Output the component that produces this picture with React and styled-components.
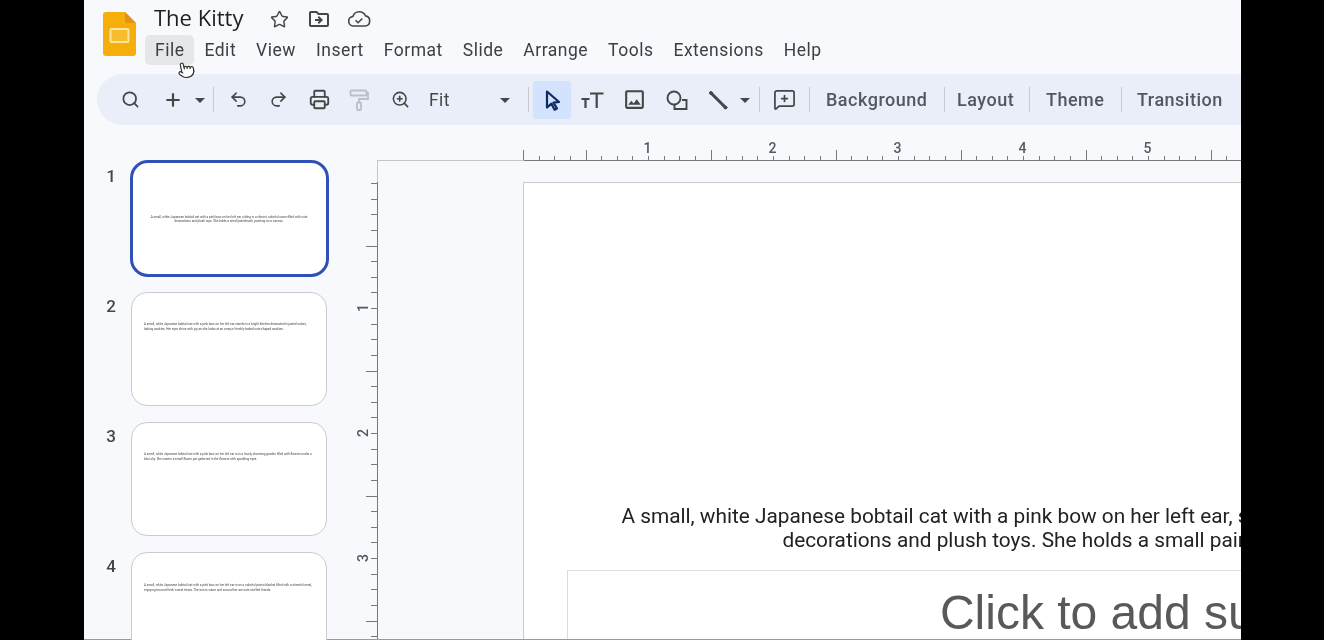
import styled, { createGlobalStyle } from 'styled-components';
import { Search, Plus, Undo2, Redo2, Printer, ZoomIn, MessageSquarePlus, Star, Pointer } from 'lucide-react';
import { MdArrowDropDown, MdOutlineDriveFileMove, MdOutlineImage } from 'react-icons/md';

const MENUS = ['Edit', 'View', 'Insert', 'Format', 'Slide', 'Arrange', 'Tools', 'Extensions', 'Help'];
const INCH = 125;

const THUMBS = [
  {
    id: 1,
    top: 52,
    center: true,
    lines: [
      'A small, white Japanese bobtail cat with a pink bow on her left ear, sitting in a vibrant, colorful room filled with cute',
      'decorations and plush toys. She holds a small paintbrush, painting on a canvas.',
    ],
  },
  {
    id: 2,
    top: 29,
    lines: [
      'A small, white Japanese bobtail cat with a pink bow on her left ear stands in a bright kitchen decorated in pastel colors,',
      'baking cookies. Her eyes shine with joy as she looks at an array of freshly baked cute shaped cookies.',
    ],
  },
  {
    id: 3,
    top: 29,
    lines: [
      'A small, white Japanese bobtail cat with a pink bow on her left ear is in a lovely charming garden filled with flowers under a',
      'blue sky. She waters a small flower pot gathered in the flowers with sparkling eyes.',
    ],
  },
  {
    id: 4,
    top: 30,
    lines: [
      'A small, white Japanese bobtail cat with a pink bow on her left ear is on a colorful picnic blanket filled with a cheerful meal,',
      'enjoying tea and fresh sweet treats. The sun is warm and around her are cute stuffed friends.',
    ],
  },
];

function range(n) {
  return Array.from({ length: n }, (_, i) => i);
}

function TopRuler() {
  const x0 = 145.5;
  return (
    <svg width="864" height="42" style={{ display: 'block' }}>
      <path d="M0 20.5H146" stroke="#c4c6ca" fill="none" />
      <path d="M146 20.5H864" stroke="#77797d" fill="none" />
      {range(56).map((i) => {
        const x = Math.floor(x0 + (i * INCH) / 8) + 0.5;
        const tall = i % 8 === 4 || i === 0;
        return <path key={i} d={`M${x} 20V${tall ? 10 : 16}`} stroke="#77797d" fill="none" />;
      })}
      {range(5).map((i) => (
        <RulerNumber key={i} x={x0 + (i + 1) * INCH - 1} y="13" textAnchor="middle">
          {i + 1}
        </RulerNumber>
      ))}
    </svg>
  );
}

function SideRuler() {
  return (
    <svg width="24" height="458" style={{ display: 'block' }}>
      <path d="M23.5 0V458" stroke="#77797d" fill="none" />
      {range(30).map((i) => {
        const y = Math.round((i * INCH) / 8) + 1.5;
        const half = i % 8 === 4;
        return <path key={i} d={`M23 ${y}H${half ? 12 : 17}`} stroke="#77797d" fill="none" />;
      })}
      {range(3).map((i) => {
        const y = (i + 1) * INCH + 1;
        return (
          <RulerNumber key={i} x="10" y={y} textAnchor="middle" dominantBaseline="middle" transform={`rotate(-90 10 ${y})`}>
            {i + 1}
          </RulerNumber>
        );
      })}
    </svg>
  );
}

function SlidesLogo() {
  return (
    <svg width="33" height="44" viewBox="0 0 33 44" style={{ display: 'block' }}>
      <path d="M3 0H22L33 11V41a3 3 0 0 1-3 3H3a3 3 0 0 1-3-3V3a3 3 0 0 1 3-3z" fill="#f6ae0a" />
      <path d="M22 0L33 11H24a2 2 0 0 1-2-2z" fill="#ea8f12" />
      <rect x="7.5" y="17" width="18" height="13" rx="1" fill="#f8bd2c" stroke="#fbe3a4" strokeWidth="2" />
    </svg>
  );
}

function CloudDone() {
  return (
    <svg width="26" height="26" viewBox="0 0 24 24" fill="none" stroke="#444746" strokeWidth="1.500" strokeLinejoin="round">
      <path d="M7 18.500a4.500 4.500 0 0 1-.6-8.960A6.200 6.200 0 0 1 18 9.100a4.750 4.750 0 0 1-.5 9.400z" />
      <path d="m8.800 13.200 2.300 2.300 4-4" />
    </svg>
  );
}

function RollerIcon() {
  return (
    <svg width="24" height="24" viewBox="0 0 24 24" fill="none" stroke="#bcbfc3" strokeWidth="1.800">
      <rect x="3.500" y="2.500" width="16" height="5" rx="1" />
      <path d="M19.500 5h1.500v6h-9v3.500" />
      <rect x="10" y="14.500" width="4" height="7.500" rx="1" />
    </svg>
  );
}

function SelectIcon() {
  return (
    <svg width="24" height="24" viewBox="0 0 24 24" fill="none" stroke="#0b2a66" strokeWidth="2.200" strokeLinejoin="round">
      <path d="M7 3.500 19 14l-5.500.6L17 20.500l-2.400 1.200-3.200-6L7 19.500z" />
    </svg>
  );
}

function TextSizeIcon() {
  return (
    <svg width="24" height="24" viewBox="0 0 24 24" fill="none" stroke="#444746" strokeWidth="2.200">
      <path d="M10 5.500h13.500M16.700 5.500V20" />
      <path d="M1.500 11h8M5.500 11v9" />
    </svg>
  );
}

function ShapesIcon() {
  return (
    <svg width="24" height="24" viewBox="0 0 24 24" fill="none" stroke="#444746" strokeWidth="1.900">
      <circle cx="9" cy="10" r="6.500" />
      <path d="M17 12h4.500v9H9.500v-4.500" />
    </svg>
  );
}

function LineIcon() {
  return (
    <svg width="24" height="24" viewBox="0 0 24 24" fill="none" stroke="#444746" strokeLinecap="round">
      <path d="M5.500 5.500 19 19" strokeWidth="3" />
      <circle cx="5" cy="5" r="1.500" fill="#444746" />
      <circle cx="19.500" cy="19.500" r="1.500" fill="#444746" />
    </svg>
  );
}

function App() {
  return (
    <Frame>
      <GlobalStyle />
      <Window>
        <Header>
          <LogoSlot>
            <SlidesLogo />
          </LogoSlot>
          <HeaderText>
            <TitleRow>
              <Title>The Kitty</Title>
              <TitleIcons>
                <TitleIcon>
                  <Star size={19} strokeWidth={1.8} />
                </TitleIcon>
                <TitleIcon>
                  <MdOutlineDriveFileMove size={24} />
                </TitleIcon>
                <TitleIcon>
                  <CloudDone />
                </TitleIcon>
              </TitleIcons>
            </TitleRow>
            <MenuBar>
              <MenuItem $hover>
                File
                <HandCursor>
                  <Pointer size={18} strokeWidth={1.6} fill="#fff" color="#333" />
                </HandCursor>
              </MenuItem>
              {MENUS.map((m) => (
                <MenuItem key={m}>{m}</MenuItem>
              ))}
            </MenuBar>
          </HeaderText>
        </Header>

        <Toolbar>
          <Tool $w={40}><Search size={19} strokeWidth={2.2} /></Tool>
          <Tool $w={46}><Plus size={20} strokeWidth={2.6} /></Tool>
          <Tool $w={8}><MdArrowDropDown size={24} /></Tool>
          <Sep $ml={9} $mr={4} />
          <Tool $w={40}><Undo2 size={19} strokeWidth={2} /></Tool>
          <Tool $w={41}><Redo2 size={19} strokeWidth={2} /></Tool>
          <Tool $w={40}><Printer size={21} strokeWidth={2.1} /></Tool>
          <Tool $w={40}><RollerIcon /></Tool>
          <Tool $w={42}><ZoomIn size={19} strokeWidth={2} /></Tool>
          <ZoomValue>Fit</ZoomValue>
          <Tool $w={16}><MdArrowDropDown size={24} /></Tool>
          <Sep $ml={15} $mr={4} />
          <ActiveTool><SelectIcon /></ActiveTool>
          <Tool $w={42}><TextSizeIcon /></Tool>
          <Tool $w={42}><MdOutlineImage size={25} /></Tool>
          <Tool $w={44}><ShapesIcon /></Tool>
          <Tool $w={38}><LineIcon /></Tool>
          <Tool $w={16}><MdArrowDropDown size={24} /></Tool>
          <Sep $ml={6} $mr={0} />
          <Tool $w={48}><MessageSquarePlus size={23} strokeWidth={1.8} /></Tool>
          <Sep $ml={1} $mr={0} />
          <TextTool $w={134} $pl={16}>Background</TextTool>
          <Sep $ml={0} $mr={0} />
          <TextTool $w={84} $pl={12}>Layout</TextTool>
          <Sep $ml={0} $mr={0} />
          <TextTool $w={91} $pl={16}>Theme</TextTool>
          <Sep $ml={0} $mr={0} />
          <TextTool $w={118} $pl={15}>Transition</TextTool>
        </Toolbar>

        <Main>
          <FilmStrip>
            {THUMBS.map((t) => (
              <ThumbRow key={t.id}>
                <ThumbNumber $selected={t.id === 1}>{t.id}</ThumbNumber>
                <Thumb $selected={t.id === 1} $center={t.center} $top={t.top}>
                  {t.lines.map((l) => (
                    <ThumbLine key={l}>{l}</ThumbLine>
                  ))}
                </Thumb>
              </ThumbRow>
            ))}
          </FilmStrip>

          <Stage>
            <Corner />
            <RulerTop>
              <TopRuler />
            </RulerTop>
            <RulerSide>
              <SideRuler />
            </RulerSide>
            <SlideArea>
              <Slide>
                <Caption>
                  A small, white Japanese bobtail cat with a pink bow on her left ear, sitting in a vibrant, colorful room filled with cute
                  <br />
                  decorations and plush toys. She holds a small paintbrush, painting on a canvas.
                </Caption>
                <Placeholder>Click to add subtitle</Placeholder>
              </Slide>
            </SlideArea>
          </Stage>
        </Main>
      </Window>
    </Frame>
  );
}

const GlobalStyle = createGlobalStyle`
  html, body {
    margin: 0;
    padding: 0;
    background: #000;
  }
  * {
    box-sizing: border-box;
  }
`;

const Frame = styled.div`
  width: 1324px;
  height: 640px;
  padding: 0 83px 0 84px;
  background: #000;
  overflow: hidden;
`;

const Window = styled.div`
  width: 1157px;
  height: 640px;
  display: flex;
  flex-direction: column;
  background: #f7f9fd;
  overflow: hidden;
  filter: blur(0.35px);
  font-family: Roboto, "Liberation Sans", sans-serif;
  color: #3c4043;
`;

const Header = styled.header`
  height: 74px;
  flex: none;
  display: flex;
  padding-left: 19px;
`;

const LogoSlot = styled.div`
  padding-top: 12px;
  margin-right: 9px;
`;

const HeaderText = styled.div`
  display: flex;
  flex-direction: column;
  padding-top: 4px;
`;

const TitleRow = styled.div`
  height: 31px;
  display: flex;
  align-items: center;
  padding-left: 9px;
`;

const Title = styled.h1`
  margin: 0 0 6px;
  width: 96px;
  font-family: "Open Sans", Roboto, sans-serif;
  font-size: 22px;
  font-weight: 400;
  color: #1f1f1f;
`;

const TitleIcons = styled.div`
  display: flex;
  align-items: center;
  margin-left: 9px;
  margin-bottom: 1px;
`;

const TitleIcon = styled.span`
  width: 40px;
  display: flex;
  justify-content: center;
  color: #444746;
`;

const MenuBar = styled.nav`
  display: flex;
`;

const MenuItem = styled.div`
  position: relative;
  height: 30px;
  padding: 0 10px;
  display: flex;
  align-items: center;
  font-size: 17.5px;
  letter-spacing: 0.5px;
  color: #3c4043;
  border-radius: 5px;
  background: ${(p) => (p.$hover ? '#e6e7ea' : 'transparent')};
`;

const HandCursor = styled.span`
  position: absolute;
  left: 32px;
  top: 26px;
  display: flex;
  transform: rotate(-12deg);
`;

const Toolbar = styled.div`
  flex: none;
  height: 51px;
  margin-left: 13px;
  padding-left: 13px;
  display: flex;
  align-items: center;
  background: #e9eef8;
  border-radius: 26px 0 0 26px;
  color: #444746;
`;

const Tool = styled.div`
  width: ${(p) => p.$w}px;
  flex: none;
  display: flex;
  align-items: center;
  justify-content: center;

  svg {
    flex: none;
  }
`;

const ActiveTool = styled.div`
  width: 38px;
  height: 38px;
  flex: none;
  display: flex;
  align-items: center;
  justify-content: center;
  background: #d3e3fd;
  border-radius: 4px;
`;

const Sep = styled.span`
  width: 1px;
  height: 25px;
  flex: none;
  margin-left: ${(p) => p.$ml}px;
  margin-right: ${(p) => p.$mr}px;
  background: #c7c9cd;
`;

const ZoomValue = styled.span`
  width: 68px;
  margin-left: 8px;
  flex: none;
  font-size: 17.5px;
  letter-spacing: 0.4px;
`;

const TextTool = styled.span`
  width: ${(p) => p.$w}px;
  padding-left: ${(p) => p.$pl}px;
  flex: none;
  font-size: 18px;
  font-weight: 500;
  letter-spacing: 0.5px;
  color: #54575b;
  white-space: nowrap;
`;

const Main = styled.main`
  flex: 1;
  min-height: 0;
  display: flex;
  border-bottom: 1px solid #9a9a9a;
`;

const FilmStrip = styled.aside`
  width: 270px;
  flex: none;
  padding-top: 35px;
  display: flex;
  flex-direction: column;
  gap: 16px;
`;

const ThumbRow = styled.div`
  display: flex;
  align-items: flex-start;
`;

const ThumbNumber = styled.span`
  width: 32px;
  margin-top: ${(p) => (p.$selected ? 2 : 0)}px;
  flex: none;
  text-align: right;
  font-size: 17px;
  font-weight: 500;
  line-height: 28px;
  color: #444746;
`;

const Thumb = styled.div`
  flex: none;
  width: ${(p) => (p.$selected ? 199 : 196)}px;
  height: ${(p) => (p.$selected ? 117 : 114)}px;
  margin: ${(p) => (p.$selected ? '-0.5px 0 -0.5px 13.5px' : '0 0 0 15px')};
  padding: ${(p) => p.$top}px 12px 0;
  background: #fff;
  border: ${(p) => (p.$selected ? '3px solid #2f50b5' : '1px solid #c9cbce')};
  border-radius: ${(p) => (p.$selected ? 18 : 16)}px;
  text-align: ${(p) => (p.$center ? 'center' : 'left')};
  overflow: hidden;
`;

const ThumbLine = styled.div`
  font-size: 3.1px;
  line-height: 4.7px;
  white-space: nowrap;
  color: #444;
`;

const Stage = styled.div`
  flex: 1;
  min-width: 0;
  display: grid;
  grid-template-columns: 24px 1fr;
  grid-template-rows: 57px 1fr;
  overflow: hidden;
`;

const Corner = styled.div`
  justify-self: end;
  width: 1px;
  margin-top: 35px;
  background: #c4c6ca;
`;

const RulerTop = styled.div`
  padding-top: 15px;
  overflow: hidden;
`;

const RulerNumber = styled.text`
  font-family: Roboto, sans-serif;
  font-size: 14px;
  font-weight: 500;
  fill: #55585c;
`;

const RulerSide = styled.div`
  overflow: hidden;
`;

const SlideArea = styled.div`
  padding-left: 145px;
  overflow: hidden;
`;

const Slide = styled.div`
  width: 1250px;
  height: 600px;
  padding-top: 321px;
  background: #fff;
  border: 1px solid #c9cbce;
`;

const Caption = styled.p`
  margin: 0;
  text-align: center;
  font-family: Roboto, sans-serif;
  font-size: 20.8px;
  line-height: 24px;
  white-space: nowrap;
  color: #222;
`;

const Placeholder = styled.div`
  margin: 18px 43px 0;
  padding-top: 14px;
  height: 200px;
  border: 1px solid #dcdcdc;
  text-align: center;
  font-family: "Liberation Sans", Arial, sans-serif;
  font-size: 48px;
  line-height: 56px;
  color: #595959;
`;

export default App;
